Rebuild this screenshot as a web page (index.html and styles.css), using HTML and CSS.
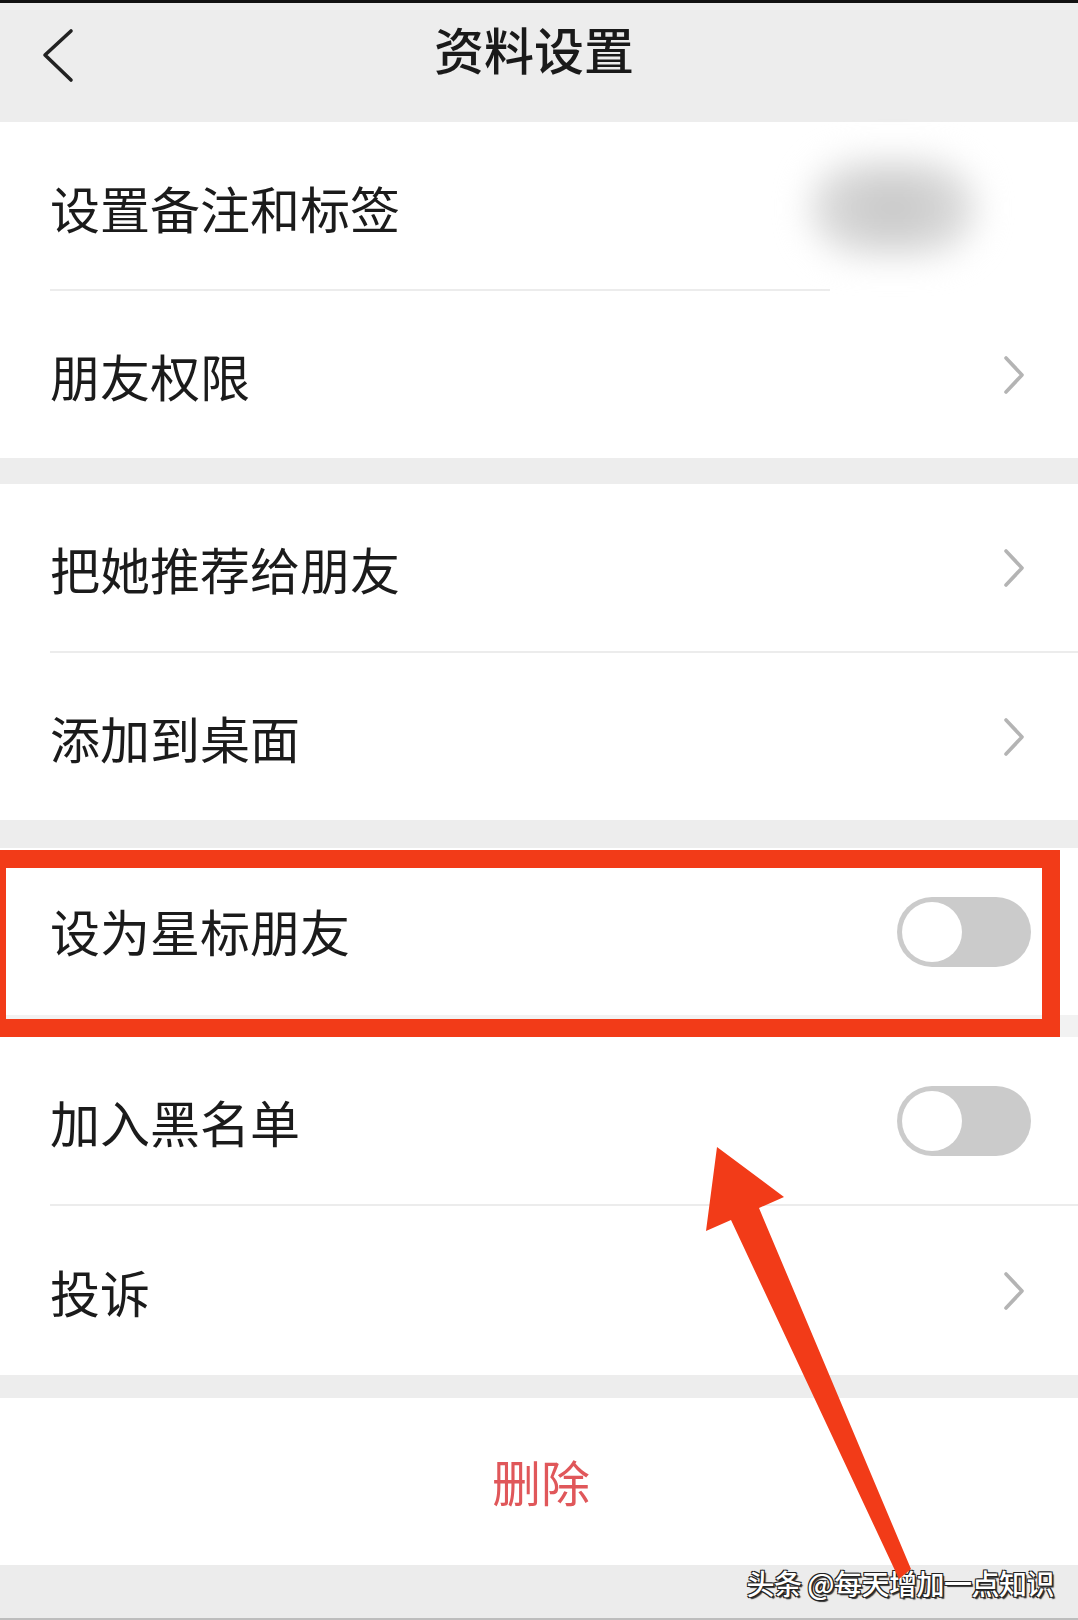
FILE: index.html
```html
<!DOCTYPE html>
<html lang="zh-CN">
<head>
<meta charset="utf-8">
<title>资料设置</title>
<link rel="stylesheet" href="styles.css">
</head>
<body>
<div class="page">
  <div class="topbar"></div>
  <header class="nav">
    <svg class="back" width="36" height="56" viewBox="0 0 36 56"><path d="M30 4 L4 28 L30 53" fill="none" stroke="#222" stroke-width="3.6" stroke-linecap="round" stroke-linejoin="round"/></svg>
    <h1 class="title">资料设置</h1>
    <span></span>
  </header>

  <section class="group">
    <div class="row first">
      <span class="label">设置备注和标签</span>
      <span class="blurval"></span>
    </div>
    <div class="divider short"></div>
    <div class="row">
      <span class="label">朋友权限</span>
      <svg class="chev" width="22" height="40" viewBox="0 0 22 40"><path d="M3 3 L19 20 L3 37" fill="none" stroke="#b4b4b4" stroke-width="3.6" stroke-linecap="round" stroke-linejoin="round"/></svg>
    </div>
  </section>
  <div class="gap g26"></div>

  <section class="group">
    <div class="row">
      <span class="label">把她推荐给朋友</span>
      <svg class="chev" width="22" height="40" viewBox="0 0 22 40"><path d="M3 3 L19 20 L3 37" fill="none" stroke="#b4b4b4" stroke-width="3.6" stroke-linecap="round" stroke-linejoin="round"/></svg>
    </div>
    <div class="divider"></div>
    <div class="row">
      <span class="label">添加到桌面</span>
      <svg class="chev" width="22" height="40" viewBox="0 0 22 40"><path d="M3 3 L19 20 L3 37" fill="none" stroke="#b4b4b4" stroke-width="3.6" stroke-linecap="round" stroke-linejoin="round"/></svg>
    </div>
  </section>
  <div class="gap g28"></div>

  <section class="group">
    <div class="row star">
      <span class="label">设为星标朋友</span>
      <span class="toggle"><span class="knob"></span></span>
      <div class="redbox"></div>
    </div>
  </section>
  <div class="gap g22"></div>

  <section class="group">
    <div class="row">
      <span class="label">加入黑名单</span>
      <span class="toggle"><span class="knob"></span></span>
    </div>
    <div class="divider"></div>
    <div class="row tall">
      <span class="label">投诉</span>
      <svg class="chev" width="22" height="40" viewBox="0 0 22 40"><path d="M3 3 L19 20 L3 37" fill="none" stroke="#b4b4b4" stroke-width="3.6" stroke-linecap="round" stroke-linejoin="round"/></svg>
    </div>
  </section>
  <div class="gap g23"></div>

  <section class="group">
    <div class="row delete">
      <span class="danger">删除</span>
    </div>
  </section>

  <footer class="bottom">
    <span class="watermark">头条 @每天增加一点知识</span>
  </footer>

  <svg class="arrow" width="1078" height="1620" viewBox="0 0 1078 1620">
    <polygon points="717,1147 784,1197 759,1208 911,1569 899,1579 731,1220 706,1231" fill="#f23b18"/>
  </svg>
</div>
</body>
</html>
```

FILE: styles.css
```css
* { box-sizing: border-box; }
html, body { margin: 0; padding: 0; background: #ffffff; }
body {
  font-family: "Noto Sans CJK SC", "Noto Sans", sans-serif;
  color: #1b1b1b;
}
.page {
  position: relative;
  width: 1078px;
  height: 1620px;
  overflow: hidden;
  background: #ffffff;
}
.topbar { height: 3px; background: #111; }
.nav {
  height: 119px;
  background: #ededed;
  display: grid;
  grid-template-columns: 1fr auto 1fr;
  align-items: center;
}
.back { margin-left: 41px; margin-top: -16px; }
.title {
  margin: 0;
  font-size: 50px;
  font-weight: 500;
  line-height: 1;
  padding-right: 10px;
  color: #1a1a1a;
  margin-top: -30px;
}
.group { background: #ffffff; }
.row {
  position: relative;
  height: 167px;
  display: flex;
  align-items: center;
  padding-left: 50px;
}
.row.tall { height: 169px; }
.label {
  font-size: 50px;
  line-height: 1;
  flex: 1;
  color: #1b1b1b;
}
.row.first .label { margin-top: 2px; }
.row.star .label { margin-top: -4px; }
.divider {
  height: 2px;
  margin-left: 50px;
  background: #ececec;
}
.divider.short { margin-right: 248px; }
.gap { background: #ededed; }
.g26 { height: 26px; }
.g28 { height: 28px; }
.g22 { height: 22px; background: #f2f2f2; }
.g23 { height: 23px; }
.chev { margin-right: 53px; }
.blurval {
  width: 170px;
  height: 100px;
  margin-right: 100px;
  margin-top: 4px;
  border-radius: 50px;
  background: radial-gradient(ellipse at center, #c6c6c6 0%, #d4d4d4 45%, #ededed 80%, #fbfbfb 100%);
  filter: blur(16px);
}
.toggle {
  position: relative;
  width: 134px;
  height: 70px;
  margin-right: 47px;
  border-radius: 35px;
  background: #cbcbcb;
}
.knob {
  position: absolute;
  left: 5px;
  top: 5px;
  width: 60px;
  height: 60px;
  border-radius: 50%;
  background: #ffffff;
}
.redbox {
  position: absolute;
  left: -12px;
  top: 2px;
  width: 1072px;
  height: 187px;
  border: 18px solid #f23b18;
  pointer-events: none;
}
.row.delete { justify-content: center; padding-left: 0; }
.danger {
  font-size: 49px;
  line-height: 1;
  color: #e0575a;
  margin-top: -2px;
  margin-left: 4px;
}
.bottom {
  height: 55px;
  background: #ececec;
  display: flex;
  justify-content: flex-end;
  align-items: center;
  padding-right: 24px;
  padding-bottom: 18px;
  border-bottom: 2px solid #bdbdbd;
}
.watermark {
  font-size: 28px;
  line-height: 1;
  color: #ffffff;
  font-weight: 500;
  letter-spacing: -0.5px;
  text-shadow: 1px 1px 0 #222, -1px -1px 0 #222, 1px -1px 0 #222, -1px 1px 0 #222, 2px 2px 1px #333;
}
.arrow {
  position: absolute;
  left: 0;
  top: 0;
  pointer-events: none;
}
```
